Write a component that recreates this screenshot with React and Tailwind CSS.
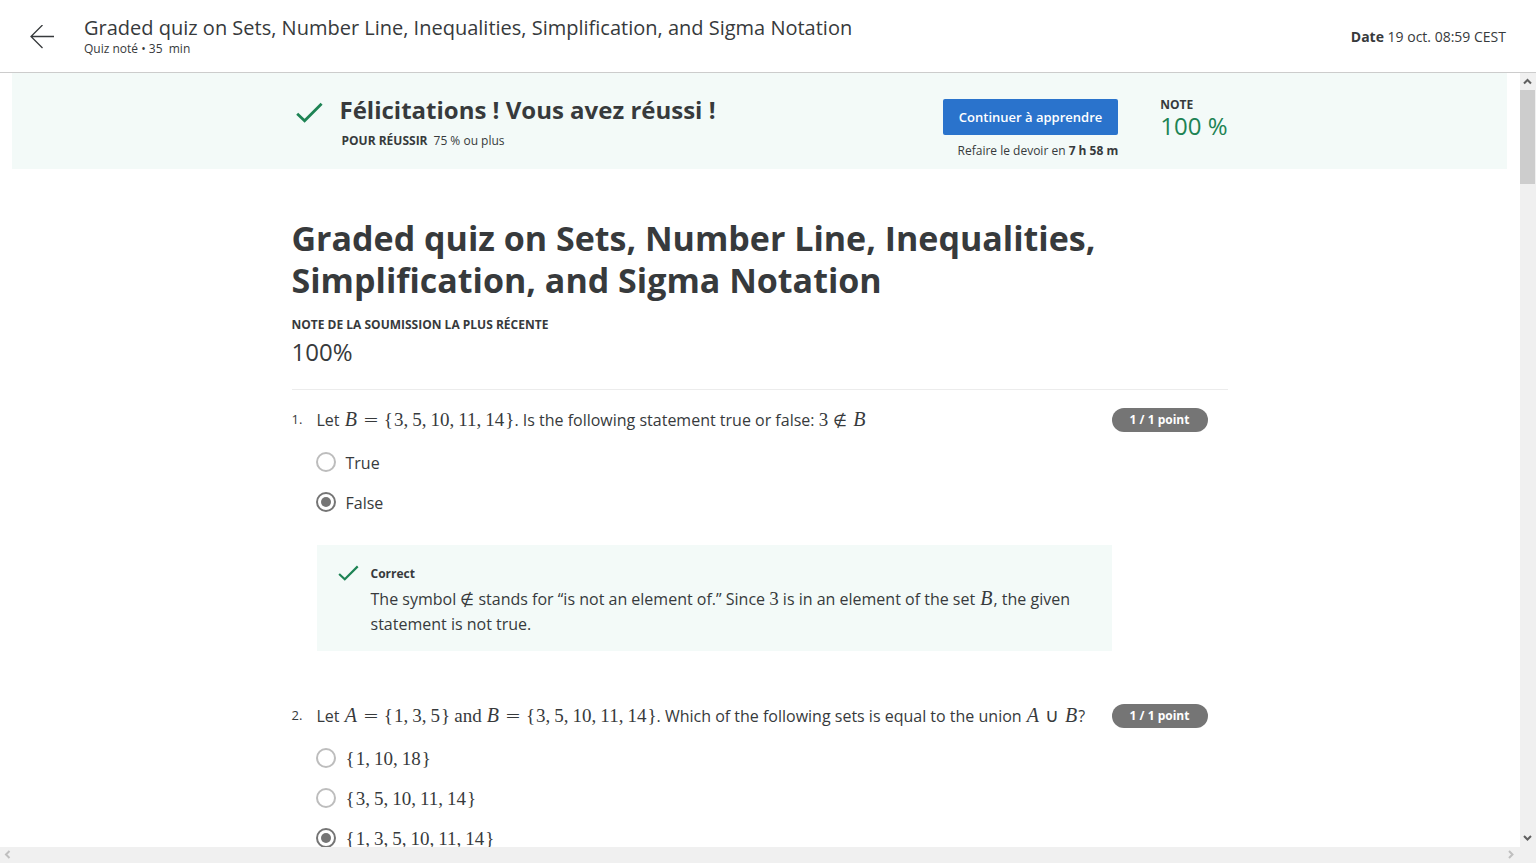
import React, { Fragment } from "react";

function Check({ className }) {
  return (
    <svg className={className} viewBox="0 0 27 21" fill="none" aria-hidden="true">
      <path d="M1.2 11.8 L8.6 18.8 L25.6 1.8" stroke="#1d8354" strokeWidth="2.8" />
    </svg>
  );
}

function MathText({ children }) {
  return (
    <span className="font-['Liberation_Serif',serif] text-[19px] leading-[0px] whitespace-nowrap">
      {children}
    </span>
  );
}

function Variable({ children }) {
  return (
    <span className="mx-px font-['Liberation_Serif',serif] text-[20px] leading-[0px] italic">
      {children}
    </span>
  );
}

function Operator({ children }) {
  return (
    <span className="mx-[5px] font-['DejaVu_Sans',sans-serif] text-[19px] leading-[0px] font-extralight">
      {children}
    </span>
  );
}

function NotIn() {
  return (
    <span className="font-['DejaVu_Sans',sans-serif] text-base leading-[0px] font-extralight">∉</span>
  );
}

function NumberSet({ values }) {
  return (
    <MathText>
      <span className="mr-px">{"{"}</span>
      {values.map((value, i) => (
        <Fragment key={i}>
          {value}
          {i < values.length - 1 && <span className="mr-1">,</span>}
        </Fragment>
      ))}
      <span className="ml-px">{"}"}</span>
    </MathText>
  );
}

function Option({ name, checked, children }) {
  return (
    <label className="-ml-px flex h-10 items-center gap-[10px]">
      <input
        type="radio"
        name={name}
        defaultChecked={checked}
        className="size-5 shrink-0 appearance-none rounded-full border-2 border-[#bdbdbd] bg-clip-content p-[3px] checked:border-[#757575] checked:bg-[#757575]"
      />
      <span className="pt-[2px] leading-6">{children}</span>
    </label>
  );
}

function Question({ number, prompt, children }) {
  return (
    <li className="flex items-start pr-5">
      <span className="w-[25px] shrink-0 text-[13px] leading-[22px]">{number}.</span>
      <div className="min-w-0 flex-1">
        <div className="h-6 leading-6 whitespace-nowrap">{prompt}</div>
        {children}
      </div>
      <span className="w-24 shrink-0 rounded-full bg-[#757575] text-center text-xs leading-6 font-bold text-white">
        1 / 1 point
      </span>
    </li>
  );
}

function Chevron({ d, color }) {
  return (
    <svg className="size-4" viewBox="0 0 16 16" fill="none" aria-hidden="true">
      <path d={d} stroke={color} strokeWidth="2" />
    </svg>
  );
}

export default function App() {
  return (
    <div className="flex h-screen flex-col overflow-hidden bg-white font-['Open_Sans','Noto_Sans',sans-serif] text-base text-[#373a3c]">
      <header className="flex h-[73px] shrink-0 items-center border-b border-[#cccccc] px-[30px] pt-[2px]">
        <a href="#" aria-label="Retour" className="mr-[30px]">
          <svg className="size-6" viewBox="0 0 24 24" fill="none" stroke="#373a3c" strokeWidth="1.3" aria-hidden="true">
            <path d="M12.5 0 L1 11.5 L12.5 23 M1 11.5 H24" />
          </svg>
        </a>
        <div>
          <div className="text-xl leading-6">
            Graded quiz on Sets, Number Line, Inequalities, Simplification, and Sigma Notation
          </div>
          <div className="text-xs leading-[18px] whitespace-pre">Quiz noté • 35  min</div>
        </div>
        <div className="ml-auto text-sm">
          <b>Date</b> 19 oct. 08:59 CEST
        </div>
      </header>

      <div className="grid min-h-0 flex-1 grid-cols-[minmax(0,1fr)_16px] grid-rows-[minmax(0,1fr)_16px]">
        <main className="overflow-hidden pr-[13px] pl-3">
          <section className="bg-[#f3faf8]">
            <div className="mx-auto flex h-24 w-full max-w-[936px] items-start">
              <Check className="mt-[29px] ml-1 h-[21px] w-[27px]" />
              <div className="ml-[17px] pt-5">
                <h2 className="text-2xl leading-[34px] font-bold">Félicitations ! Vous avez réussi !</h2>
                <p className="mt-1 pl-[2px] text-xs leading-5">
                  <b className="mr-[6px]">POUR RÉUSSIR</b>75 % ou plus
                </p>
              </div>
              <div className="ml-auto flex flex-col items-end pt-[26px]">
                <button type="button" className="h-9 rounded-xs bg-[#2a73cc] px-4 pt-[2px] text-[13px] font-semibold text-white">
                  Continuer à apprendre
                </button>
                <p className="mt-[6px] text-xs leading-5">
                  Refaire le devoir en <b>7 h 58 m</b>
                </p>
              </div>
              <div className="ml-[42px] pt-[22px]">
                <div className="text-xs leading-5 font-bold">NOTE</div>
                <div className="text-2xl leading-[22px] text-[#1d8354]">100 %</div>
              </div>
            </div>
          </section>

          <div className="mx-auto w-full max-w-[936px] pt-12">
            <h1 className="text-[34px] leading-[42px] font-bold">
              Graded quiz on Sets, Number Line, Inequalities, Simplification, and Sigma Notation
            </h1>
            <div className="mt-[14px] text-xs leading-5 font-bold">NOTE DE LA SOUMISSION LA PLUS RÉCENTE</div>
            <div className="text-2xl leading-[34px]">100%</div>
            <hr className="mt-5 border-[#ececec]" />

            <ol className="pt-[18px]">
              <Question
                number={1}
                prompt={
                  <>
                    Let <Variable>B</Variable>
                    <Operator>=</Operator>
                    <NumberSet values={[3, 5, 10, 11, 14]} />. Is the following statement true or false:{" "}
                    <MathText>3</MathText>
                    <span className="mx-[5px]"><NotIn /></span>
                    <Variable>B</Variable>
                  </>
                }
              >
                <div className="mt-[10px]">
                  <Option name="q1">True</Option>
                  <Option name="q1" checked>False</Option>
                </div>
                <div className="mt-[23px] flex h-[106px] bg-[#f3faf8] px-[21px] pt-[18px]">
                  <Check className="mt-[2px] h-4 w-[21px] shrink-0" />
                  <div className="ml-3">
                    <div className="text-xs leading-[22px] font-bold">Correct</div>
                    <p className="mt-[2px] leading-[25px]">
                      The symbol <NotIn /> stands for “is not an element of.” Since{" "}
                      <MathText>3</MathText> is in an element of the set <Variable>B</Variable>, the
                      given statement is not true.
                    </p>
                  </div>
                </div>
                <div className="h-[53px]" />
              </Question>
              <Question
                number={2}
                prompt={
                  <>
                    Let <Variable>A</Variable>
                    <Operator>=</Operator>
                    <NumberSet values={[1, 3, 5]} /> <MathText>and</MathText>{" "}
                    <Variable>B</Variable>
                    <Operator>=</Operator>
                    <NumberSet values={[3, 5, 10, 11, 14]} />. Which of the following sets is equal to the
                    union <Variable>A</Variable>
                    <Operator>∪</Operator>
                    <Variable>B</Variable>?
                  </>
                }
              >
                <div className="mt-[10px]">
                  <Option name="q2"><NumberSet values={[1, 10, 18]} /></Option>
                  <Option name="q2"><NumberSet values={[3, 5, 10, 11, 14]} /></Option>
                  <Option name="q2" checked><NumberSet values={[1, 3, 5, 10, 11, 14]} /></Option>
                </div>
              </Question>
            </ol>
          </div>
        </main>

        <div className="flex flex-col bg-[#f0f0f0]" aria-hidden="true">
          <Chevron d="M4 10.5 L7.5 7 L11 10.5" color="#606060" />
          <div className="mt-px mr-px h-[94px] bg-[#cdcdcd]" />
          <div className="mt-auto">
            <Chevron d="M4 5 L7.5 8.5 L11 5" color="#606060" />
          </div>
        </div>
        <div className="flex justify-between bg-[#f0f0f0]" aria-hidden="true">
          <Chevron d="M9.5 4 L6 7.5 L9.5 11" color="#bfbfbf" />
          <Chevron d="M5 4 L8.5 7.5 L5 11" color="#bfbfbf" />
        </div>
        <div className="bg-[#f0f0f0]" />
      </div>
    </div>
  );
}
